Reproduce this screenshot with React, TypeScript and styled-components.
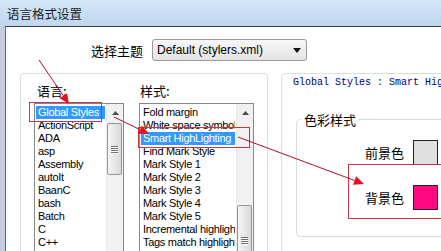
import React from 'react';
import styled, { createGlobalStyle } from 'styled-components';

const GlobalStyle = createGlobalStyle`
  html, body {
    margin: 0;
    padding: 0;
    background: #fff;
  }
  body {
    font-family: 'Liberation Sans', 'Noto Sans CJK SC', sans-serif;
  }
`;

const CJK = `'Noto Sans CJK SC', 'Liberation Sans', sans-serif`;

const Window = styled.div`
  position: relative;
  width: 441px;
  height: 251px;
  overflow: hidden;
  display: flex;
  flex-direction: column;
  background: #cfd9e6;
`;

const TitleBar = styled.div`
  flex: none;
  height: 26px;
  display: flex;
  align-items: center;
  padding-left: 7px;
  background: linear-gradient(#d4e5f7, #bfd7f0);
  font-family: ${CJK};
  font-size: 12.5px;
  color: #1b1b1b;
`;

const Frame = styled.div`
  flex: 1;
  min-height: 0;
  display: flex;
  padding-left: 5px;
  background: linear-gradient(90deg, #c3cfdd, #dde5ef);
`;

const Client = styled.div`
  flex: 1;
  min-width: 0;
  display: flex;
  flex-direction: column;
  background: #fff;
  border-top: 1px solid #3a3a3a;
  border-left: 1px solid #6b6b6b;
`;

const ThemeRow = styled.div`
  flex: none;
  display: flex;
  align-items: center;
  gap: 9px;
  margin-top: 12px;
  padding-left: 85px;
  height: 22px;
`;

const Label = styled.span`
  font-family: ${CJK};
  font-size: 13px;
  line-height: 17px;
  color: #000;
  white-space: nowrap;
`;

const Combo = styled.div`
  box-sizing: border-box;
  width: 155px;
  height: 22px;
  display: flex;
  align-items: center;
  justify-content: space-between;
  padding: 0 5px 0 4px;
  border: 1px solid #9a9a9a;
  border-radius: 3px;
  background: linear-gradient(#f7f7f7, #e4e4e4);
  font-size: 12px;
  color: #000;
`;

const Groups = styled.div`
  flex: none;
  display: flex;
  gap: 13px;
  margin-top: 12px;
  padding-left: 14px;
`;

const LeftGroup = styled.div`
  box-sizing: border-box;
  flex: none;
  width: 248px;
  height: 200px;
  display: flex;
  gap: 15px;
  padding: 8px 0 0 13px;
  border: 1px solid #d8dee3;
  border-radius: 4px;
`;

const Column = styled.div`
  display: flex;
  flex-direction: column;
  gap: 4px;
`;

const ColumnLabel = styled(Label)<{ $indent: number }>`
  padding-left: ${(p) => p.$indent}px;
`;

const ListBox = styled.div<{ $width: number }>`
  box-sizing: border-box;
  width: ${(p) => p.$width}px;
  height: 160px;
  display: flex;
  border: 1px solid #828790;
  background: #fff;
`;

const Items = styled.div`
  flex: 1;
  min-width: 0;
  padding: 2px 1px 0 1px;
  overflow: hidden;
`;

const Item = styled.div<{ $selected?: boolean }>`
  height: 13px;
  line-height: 13px;
  padding-left: 2px;
  font-size: 11px;
  letter-spacing: -0.3px;
  white-space: nowrap;
  overflow: hidden;
  color: ${(p) => (p.$selected ? '#fff' : '#000')};
  background: ${(p) => (p.$selected ? '#3399ff' : 'transparent')};
`;

const ScrollBar = styled.div`
  flex: none;
  width: 17px;
  display: flex;
  flex-direction: column;
  background: #f1f1f1;
  border-left: 1px solid #e9e9e9;
  box-sizing: border-box;
`;

const ScrollButton = styled.div`
  flex: none;
  height: 17px;
  display: flex;
  align-items: center;
  justify-content: center;
`;

const Thumb = styled.div<{ $offset: number; $size: number }>`
  box-sizing: border-box;
  flex: none;
  margin: ${(p) => p.$offset}px 1px 0 0;
  height: ${(p) => p.$size}px;
  display: flex;
  flex-direction: column;
  align-items: center;
  justify-content: center;
  gap: 1px;
  border: 1px solid #979797;
  border-radius: 2px;
  background: linear-gradient(90deg, #f5f5f5, #d9d9d9);
`;

const GripLine = styled.div`
  width: 7px;
  height: 1px;
  background: #6f6f6f;
  box-shadow: 0 1px 0 #fff;
`;

const RightPanel = styled.div`
  box-sizing: border-box;
  flex: none;
  width: 220px;
  height: 200px;
  border: 1px solid #d8dee3;
  border-radius: 4px;
`;

const PathText = styled.div`
  margin-top: 3px;
  padding-left: 11px;
  font-family: 'Liberation Mono', monospace;
  font-size: 10px;
  line-height: 12px;
  color: #00007f;
  white-space: nowrap;
`;

const ColorGroup = styled.fieldset`
  margin: 22px 0 0 14px;
  padding: 12px 0 26px 0;
  min-width: 0;
  display: flex;
  flex-direction: column;
  gap: 20px;
  border: 1px solid #d5dce2;
  border-radius: 4px;
`;

const Legend = styled.legend`
  margin-left: 4px;
  padding: 0 3px;
  font-family: ${CJK};
  font-size: 13px;
  line-height: 17px;
  color: #000;
`;

const ColorRow = styled.div`
  display: flex;
  align-items: center;
  gap: 9px;
  padding-left: 68px;
`;

const Swatch = styled.div<{ $color: string }>`
  box-sizing: border-box;
  width: 25px;
  height: 25px;
  border: 1px solid #222;
  background: ${(p) => p.$color};
`;

const Overlay = styled.svg`
  position: absolute;
  left: 0;
  top: 0;
  pointer-events: none;
`;

function UpArrow() {
  return (
    <svg width="7" height="4" viewBox="0 0 7 4">
      <path d="M0 4 L3.5 0 L7 4 Z" fill="#4a4a4a" />
    </svg>
  );
}

function DownArrow() {
  return (
    <svg width="8" height="5" viewBox="0 0 8 5">
      <path d="M0 0 L8 0 L4 5 Z" fill="#111" />
    </svg>
  );
}

function List({
  width,
  items,
  selected,
  thumbOffset,
  thumbSize,
}: {
  width: number;
  items: string[];
  selected: number;
  thumbOffset: number;
  thumbSize: number;
}) {
  return (
    <ListBox $width={width}>
      <Items>
        {items.map((it, i) => (
          <Item key={i} $selected={i === selected}>
            {it}
          </Item>
        ))}
      </Items>
      <ScrollBar>
        <ScrollButton>
          <UpArrow />
        </ScrollButton>
        <Thumb $offset={thumbOffset} $size={thumbSize}>
          <GripLine />
          <GripLine />
          <GripLine />
          <GripLine />
        </Thumb>
      </ScrollBar>
    </ListBox>
  );
}

// red annotation arrow: line from a to b with a filled head at b
function Arrow({ x1, y1, x2, y2 }: { x1: number; y1: number; x2: number; y2: number }) {
  const dx = x2 - x1;
  const dy = y2 - y1;
  const len = Math.hypot(dx, dy);
  const ux = dx / len;
  const uy = dy / len;
  const hl = 10;
  const hw = 4.5;
  const bx = x2 - ux * hl;
  const by = y2 - uy * hl;
  const pts = [
    `${x2},${y2}`,
    `${bx - uy * hw},${by + ux * hw}`,
    `${bx + uy * hw},${by - ux * hw}`,
  ].join(' ');
  return (
    <g>
      <line x1={x1} y1={y1} x2={bx} y2={by} stroke="#b0122a" strokeWidth="1" />
      <polygon points={pts} fill="#e8101e" />
    </g>
  );
}

const languages = [
  'Global Styles',
  'ActionScript',
  'ADA',
  'asp',
  'Assembly',
  'autoIt',
  'BaanC',
  'bash',
  'Batch',
  'C',
  'C++',
];

const styles = [
  'Fold margin',
  'White space symbol',
  'Smart HighLighting',
  'Find Mark Style',
  'Mark Style 1',
  'Mark Style 2',
  'Mark Style 3',
  'Mark Style 4',
  'Mark Style 5',
  'Incremental highlighting',
  'Tags match highlighting',
];

export default function App() {
  return (
    <>
      <GlobalStyle />
      <Window>
        <TitleBar>语言格式设置</TitleBar>
        <Frame>
          <Client>
            <ThemeRow>
              <Label>选择主题</Label>
              <Combo>
                <span>Default (stylers.xml)</span>
                <DownArrow />
              </Combo>
            </ThemeRow>
            <Groups>
              <LeftGroup>
                <Column>
                  <ColumnLabel $indent={3}>语言:</ColumnLabel>
                  <List width={90} items={languages} selected={0} thumbOffset={2} thumbSize={52} />
                </Column>
                <Column>
                  <ColumnLabel $indent={1}>样式:</ColumnLabel>
                  <List width={115} items={styles} selected={2} thumbOffset={84} thumbSize={70} />
                </Column>
              </LeftGroup>
              <RightPanel>
                <PathText>Global Styles : Smart HighLighting</PathText>
                <ColorGroup>
                  <Legend>色彩样式</Legend>
                  <ColorRow>
                    <Label>前景色</Label>
                    <Swatch $color="#e0e0e0" />
                  </ColorRow>
                  <ColorRow>
                    <Label>背景色</Label>
                    <Swatch $color="#ff0a80" />
                  </ColorRow>
                </ColorGroup>
              </RightPanel>
            </Groups>
          </Client>
        </Frame>
        <Overlay width="441" height="251" viewBox="0 0 441 251">
          <rect x="29.5" y="102.5" width="72" height="19" fill="none" stroke="#cc3344" />
          <rect x="138.5" y="127.5" width="111" height="20" fill="none" stroke="#cc3344" />
          <rect x="348.5" y="164.5" width="100" height="54" fill="none" stroke="#cc3344" />
          <Arrow x1={39} y1={60} x2={69} y2={104} />
          <Arrow x1={114} y1={117} x2={149} y2={134} />
          <Arrow x1={238} y1={137} x2={364} y2={184} />
        </Overlay>
      </Window>
    </>
  );
}
